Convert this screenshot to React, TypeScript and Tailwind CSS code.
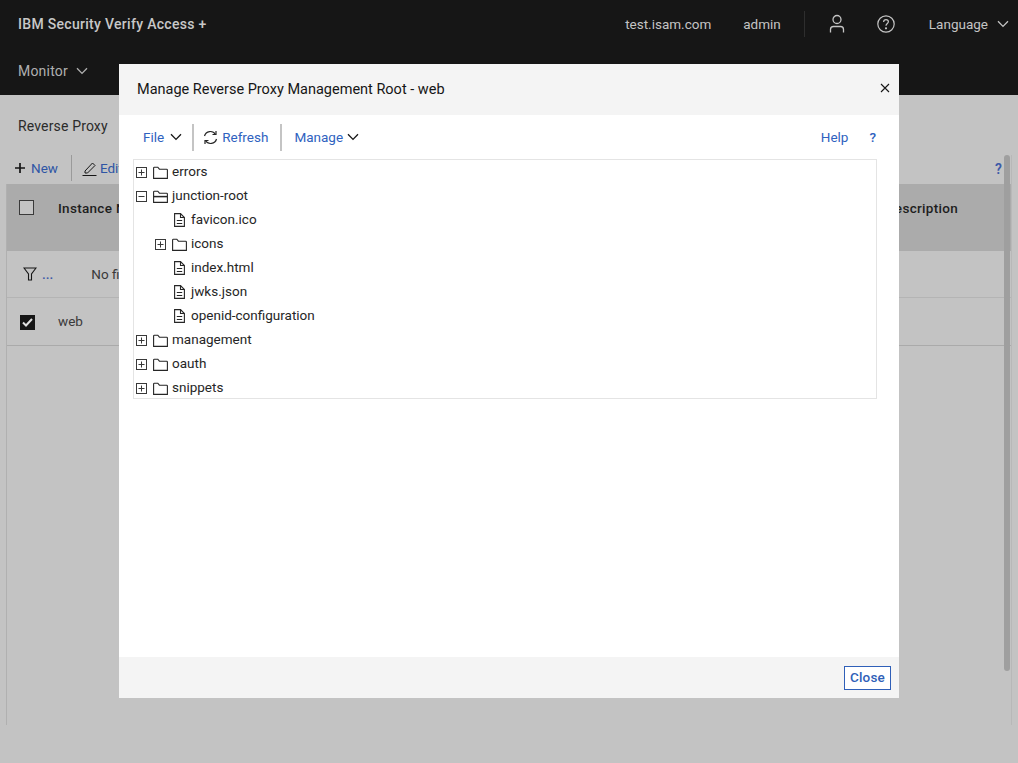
import React from "react";

const font = { fontFamily: 'Roboto, "Liberation Sans", sans-serif' };

function Chevron({ className = "" }: { className?: string }) {
  return (
    <svg width="12" height="8" viewBox="0 0 12 8" fill="none" stroke="currentColor" strokeWidth="1.3" className={className}>
      <path d="M1 1.2 L6 6.4 L11 1.2" />
    </svg>
  );
}

function PlusBox({ minus }: { minus?: boolean }) {
  return (
    <svg width="11" height="11" viewBox="0 0 11 11" fill="none" stroke="#393939" strokeWidth="1" className="shrink-0">
      <rect x="0.5" y="0.5" width="10" height="10" />
      <path d="M2.5 5.5 H8.5" />
      {!minus && <path d="M5.5 2.5 V8.5" />}
    </svg>
  );
}

function Folder({ open }: { open?: boolean }) {
  return (
    <svg width="15" height="13" viewBox="0 0 15 13" fill="none" stroke="#262626" strokeWidth="1.1" className="shrink-0">
      <path d="M0.6 12.4 V2 Q0.6 1.2 1.4 1.2 H4.8 L6.4 3.2 H13.6 Q14.4 3.2 14.4 4 V12.4 Z" />
      {open && <path d="M0.6 6.6 H14.4" strokeWidth="1.5" />}
    </svg>
  );
}

function FileIcon() {
  return (
    <svg width="11" height="14" viewBox="0 0 11 14" fill="none" stroke="#262626" strokeWidth="1.1" className="shrink-0">
      <path d="M0.6 0.6 H6.5 L10.4 4.5 V13.4 H0.6 Z" />
      <path d="M6.5 0.6 V4.5 H10.4" />
      <path d="M2.8 7.5 H8.2 M2.8 10.5 H8.2" />
    </svg>
  );
}

function TreeRow({ kind, label, depth }: { kind: "closed" | "open" | "file"; label: string; depth: number }) {
  return (
    <div className={`flex h-6 items-center text-[13.5px] text-[#262626] ${depth ? "pl-[21px]" : "pl-[2px]"}`}>
      {kind === "file" ? (
        <div className="ml-[19px] mr-[6px] flex w-[11px] justify-center"><FileIcon /></div>
      ) : (
        <>
          <PlusBox minus={kind === "open"} />
          <div className="ml-[6px] mr-[4px]"><Folder open={kind === "open"} /></div>
        </>
      )}
      <span className="-mt-px">{label}</span>
    </div>
  );
}

export default function App() {
  const tree: { kind: "closed" | "open" | "file"; label: string; depth: number }[] = [
    { kind: "closed", label: "errors", depth: 0 },
    { kind: "open", label: "junction-root", depth: 0 },
    { kind: "file", label: "favicon.ico", depth: 1 },
    { kind: "closed", label: "icons", depth: 1 },
    { kind: "file", label: "index.html", depth: 1 },
    { kind: "file", label: "jwks.json", depth: 1 },
    { kind: "file", label: "openid-configuration", depth: 1 },
    { kind: "closed", label: "management", depth: 0 },
    { kind: "closed", label: "oauth", depth: 0 },
    { kind: "closed", label: "snippets", depth: 0 },
  ];

  return (
    <div style={font} className="relative h-[763px] w-[1018px] overflow-hidden bg-[#c3c3c3]">
      {/* Header */}
      <header className="h-[95px] bg-[#161616] text-[#c4c4c4]">
        <div className="flex h-[48px] items-center pl-[18px] pr-[9px] text-[13.5px]">
          <span className="text-[14px] font-medium tracking-[0.3px] text-[#c8c8c8]">IBM Security Verify Access +</span>
          <div className="ml-auto flex items-center">
            <span>test.isam.com</span>
            <span className="ml-[32px]">admin</span>
            <div className="ml-[23px] h-[26px] w-px bg-[#2e2e2e]" />
            <svg width="16" height="20" viewBox="0 0 16 20" fill="none" stroke="#c4c4c4" strokeWidth="1.3" className="ml-[24px]">
              <circle cx="8" cy="5.5" r="4" />
              <path d="M1.5 18.5 V15.5 A3 3 0 0 1 4.5 12.5 H11.5 A3 3 0 0 1 14.5 15.5 V18.5" />
            </svg>
            <svg width="18" height="18" viewBox="0 0 18 18" fill="none" stroke="#c4c4c4" strokeWidth="1.2" className="ml-[32px]">
              <circle cx="9" cy="9" r="8.2" />
              <path d="M6.6 7 C6.6 5.4 7.7 4.6 9 4.6 C10.4 4.6 11.4 5.5 11.4 6.8 C11.4 8.4 9 8.6 9 10.8" />
              <circle cx="9" cy="13.3" r="0.5" fill="#c4c4c4" />
            </svg>
            <span className="ml-[34px]">Language</span>
            <Chevron className="ml-[9px]" />
          </div>
        </div>
        <div className="flex h-[46px] items-center pl-[18px] text-[14px] tracking-[0.2px] text-[#b0b0b0]">
          <span>Monitor</span>
          <Chevron className="ml-[8px]" />
        </div>
      </header>

      {/* Page under the dialog */}
      <main className="h-[668px]">
        <div className="flex h-[60px] items-center pl-[18px] pt-[3px] text-[14px] tracking-[0.15px] text-[#2b2b2b]">Reverse Proxy</div>
        <div className="flex h-[26px] items-center pl-[15px] text-[13.5px] text-[#2e55a5]">
          <svg width="10" height="10" viewBox="0 0 10 10" stroke="#161616" strokeWidth="1.7"><path d="M5 0 V10 M0 5 H10" /></svg>
          <span className="ml-[6px]">New</span>
          <div className="ml-[13px] h-[26px] w-px bg-[#9a9a9a]" />
          <svg width="15" height="15" viewBox="0 0 15 15" fill="none" stroke="#161616" strokeWidth="1" className="ml-[10px]">
            <path d="M3 10 L10.5 2 L13 4.5 L5.5 12 H3 Z M0.5 14.5 H14.5" />
          </svg>
          <span className="ml-[3px]">Edit</span>
        </div>
        <div className="ml-[6px] mt-[3px] h-[541px] w-[1005px] border-l border-[#b0b0b0]">
          <div className="flex h-[67px] bg-[#ababab] pl-[12px] pt-[16px] text-[13.5px] font-medium tracking-[0.3px] text-[#1e1e1e]">
            <div className="h-[15px] w-[15px] border border-[#3a3a3a] bg-[#c4c4c4]" />
            <span className="ml-[24px] mt-[-2px]">Instance Name</span>
            <span className="ml-auto mr-[53px] mt-[-2px]">Description</span>
          </div>
          <div className="flex h-[47px] items-center border-b border-[#b4b4b4] pl-[16px] text-[13.5px] text-[#3a3a3a]">
            <svg width="14" height="14" viewBox="0 0 14 14" fill="none" stroke="#161616" strokeWidth="1.1">
              <path d="M1 1 H13 L8.5 7 V13 H5.5 V7 Z" />
            </svg>
            <span className="ml-[5px] font-medium text-[#3d5aa8]">...</span>
            <span className="ml-[38px]">No filter applied</span>
          </div>
          <div className="flex h-[48px] items-center border-b border-[#aaaaaa] pl-[13px] pt-[2px] text-[13.5px] text-[#3a3a3a]">
            <div className="flex h-[15px] w-[15px] items-center justify-center bg-[#161616]">
              <svg width="11" height="9" viewBox="0 0 11 9" fill="none" stroke="#e0e0e0" strokeWidth="2"><path d="M1 4.5 L4 7.5 L10 1" /></svg>
            </div>
            <span className="ml-[23px] -mt-[2px]">web</span>
          </div>
        </div>
      </main>

      {/* Floating help mark and scrollbar */}
      <span className="absolute left-[995px] top-[159px] text-[14px] font-semibold text-[#3d5aa8]">?</span>
      <div className="absolute left-[1011px] top-[155px] h-[570px] w-px bg-[#b8b8b8]" />
      <div className="absolute left-[1004px] top-[155px] h-[516px] w-[6px] rounded-[3px] bg-[#9f9f9f]" />

      {/* Dialog */}
      <div className="absolute left-[119px] top-[64px] flex h-[634px] w-[780px] flex-col bg-white">
        <div className="flex h-[51px] items-center justify-between bg-[#f4f4f4] pl-[18px] pr-[9px] text-[14.5px] text-[#161616]">
          <span>Manage Reverse Proxy Management Root - web</span>
          <svg width="10" height="10" viewBox="0 0 10 10" stroke="#161616" strokeWidth="1.1" className="-mt-[3px]"><path d="M1 1 L9 9 M9 1 L1 9" /></svg>
        </div>
        <div className="flex h-[44px] items-center pl-[24px] pr-[23px] text-[13.5px] text-[#2f62c0]">
          <span>File</span>
          <Chevron className="ml-[6px] text-[#161616]" />
          <div className="ml-[10px] h-[27px] w-[2px] bg-[#c4c4c4]" />
          <svg width="15" height="15" viewBox="0 0 15 15" fill="none" stroke="#262626" strokeWidth="1.2" className="ml-[9px]">
            <path d="M1.5 6 A6 6 0 0 1 12.5 4.5 M13.5 9 A6 6 0 0 1 2.5 10.5" />
            <path d="M9.5 4.5 H13 V1 M5.5 10.5 H2 V14" />
          </svg>
          <span className="ml-[4px]">Refresh</span>
          <div className="ml-[12px] h-[27px] w-[2px] bg-[#c4c4c4]" />
          <span className="ml-[12px]">Manage</span>
          <Chevron className="ml-[4px] text-[#161616]" />
          <span className="ml-auto">Help</span>
          <span className="ml-[21px] font-medium">?</span>
        </div>
        <div className="mx-[14px] h-[240px] w-[744px] border border-[#e4e4e4] bg-white">
          {tree.map((r) => (
            <TreeRow key={r.label} {...r} />
          ))}
        </div>
        <div className="mt-auto flex h-[41px] items-center justify-end bg-[#f4f4f4] pr-[8px]">
          <button className="flex h-[24px] w-[47px] items-center justify-center border border-[#2f5fb8] bg-white text-[13.5px] font-medium tracking-[0.2px] text-[#2f5fb8]">
            Close
          </button>
        </div>
      </div>
    </div>
  );
}
